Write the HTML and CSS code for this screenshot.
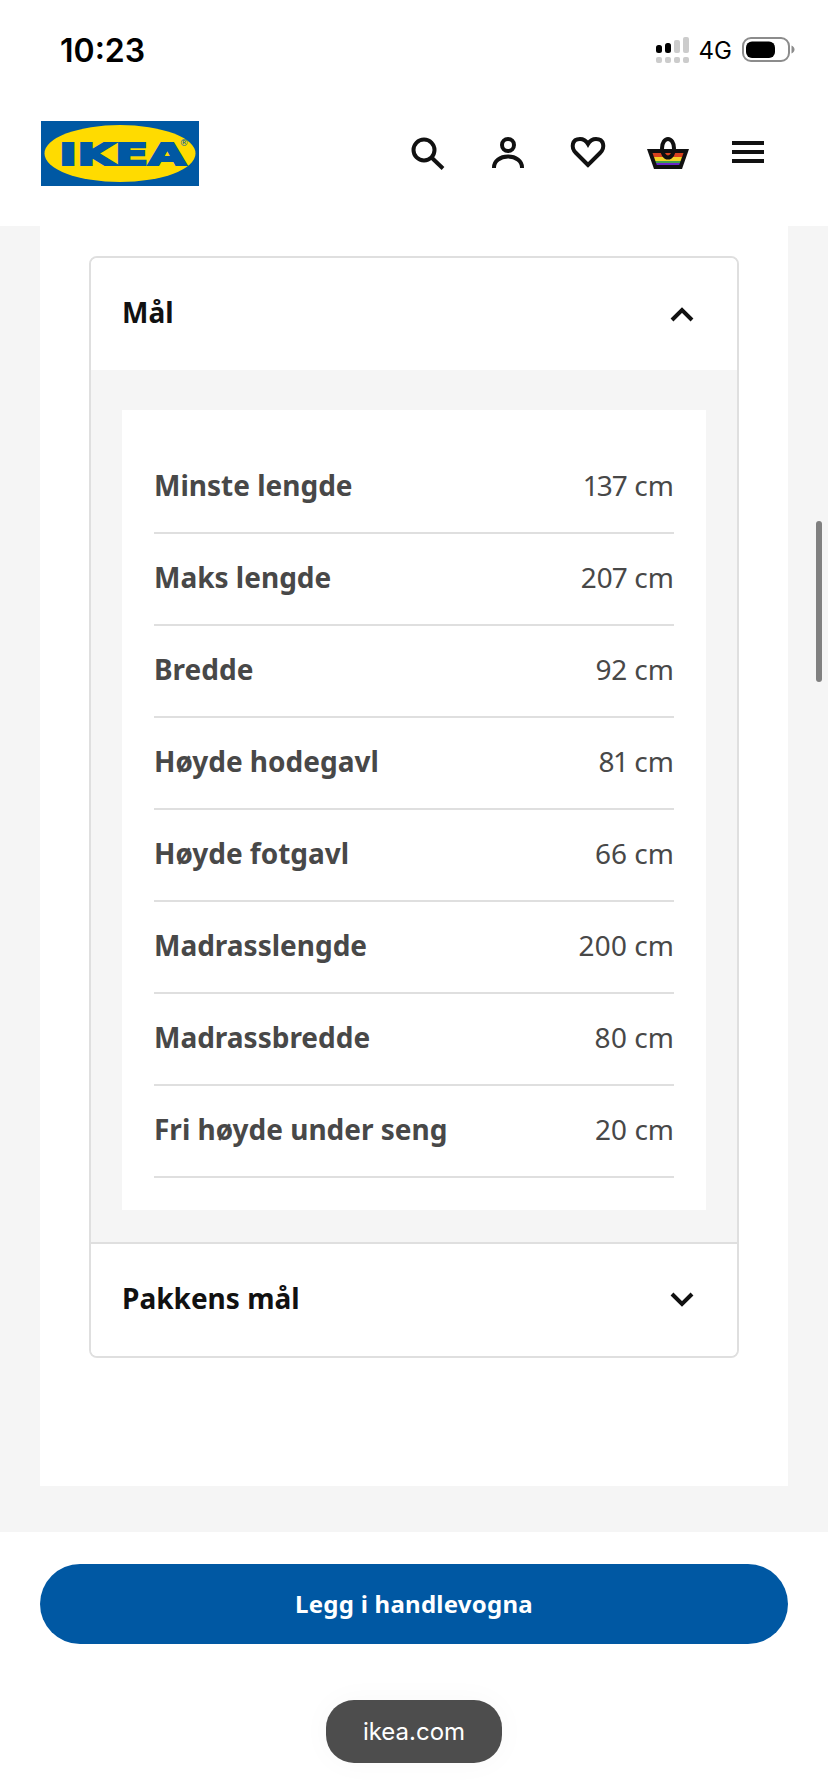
FILE: index.html
```html
<!DOCTYPE html>
<html lang="nb">
<head>
<meta charset="utf-8">
<title>IKEA – Mål</title>
<link rel="stylesheet" href="styles.css">
</head>
<body>
<div class="page">
  <div class="status">
    <span class="time">10:23</span>
    <div class="status-right">
      <svg class="signal" width="33" height="26" viewBox="0 0 33 26">
        <rect x="0" y="8" width="6" height="8" rx="2.5" fill="#000"/>
        <rect x="9" y="6" width="6" height="10" rx="2.5" fill="#000"/>
        <rect x="18" y="3" width="6" height="13" rx="2" fill="#ccc"/>
        <rect x="27" y="0" width="6" height="16" rx="2" fill="#ccc"/>
        <rect x="0" y="20" width="6" height="6" rx="2" fill="#ccc"/>
        <rect x="9" y="20" width="6" height="6" rx="2" fill="#ccc"/>
        <rect x="18" y="20" width="6" height="6" rx="2" fill="#ccc"/>
        <rect x="27" y="20" width="6" height="6" rx="2" fill="#ccc"/>
      </svg>
      <span class="net">4G</span>
      <svg class="battery" width="53" height="26" viewBox="0 0 53 26">
        <rect x="1" y="1" width="46" height="23" rx="8" fill="none" stroke="#8c8c8c" stroke-width="2"/>
        <rect x="4" y="4.500" width="29" height="16.500" rx="6" fill="#000"/>
        <path d="M49.500 8.500c2 .8 3 2.300 3 4s-1 3.200-3 4z" fill="#8c8c8c"/>
      </svg>
    </div>
  </div>

  <header class="header">
    <svg class="logo" width="158" height="65" viewBox="0 0 158 65">
      <rect width="158" height="65" fill="#0058a3"/>
      <ellipse cx="79" cy="32.500" rx="75.500" ry="28.500" fill="#ffdb00"/>
      <text class="logo-text" x="18" y="43.500" textLength="127" lengthAdjust="spacingAndGlyphs">IKEA</text>
      <text class="logo-reg" x="138.500" y="25">®</text>
    </svg>
    <nav class="nav">
      <svg class="icon" width="48" height="48" viewBox="0 0 48 48" fill="none" stroke="#111" stroke-width="4">
        <circle cx="20" cy="22" r="10.500"/>
        <path d="M27.500 29.500L39 40.500"/>
      </svg>
      <svg class="icon" width="48" height="48" viewBox="0 0 48 48" fill="none" stroke="#111" stroke-width="4">
        <circle cx="24" cy="17" r="6"/>
        <path d="M10 40v-.5c0-6.500 6-11 14-11s14 4.500 14 11v.5"/>
      </svg>
      <svg class="icon" width="48" height="48" viewBox="0 0 48 48" fill="none" stroke="#111" stroke-width="4">
        <path d="M24 37L12 25C6.500 19.500 8 11 16 11c4 0 6.500 2.500 8 5 1.500-2.500 4-5 8-5 8 0 9.500 8.500 4 14z"/>
      </svg>
      <svg class="icon" width="48" height="48" viewBox="0 0 48 48">
        <path d="M3 21h42l-7 20H10z" fill="#111"/>
        <path d="M8.500 25h31l-1.400 4h-28.200z" fill="#d8431f"/>
        <path d="M10 29h28l-1.400 4h-25.200z" fill="#f5d327"/>
        <path d="M11.400 33h25.200l-.7 2H12.100z" fill="#3fa24a"/>
        <path d="M12.100 35h23.800l-.7 2H12.800z" fill="#6a25c9"/>
        <ellipse cx="24" cy="20.250" rx="6" ry="9.250" fill="none" stroke="#111" stroke-width="4"/>
      </svg>
      <div class="burger"><span></span><span></span><span></span></div>
    </nav>
  </header>

  <main class="content">
    <section class="panel">
      <div class="accordion">
        <div class="acc-head">
          <h2 class="acc-title">Mål</h2>
          <svg width="24" height="16" viewBox="0 0 24 16" fill="none" stroke="#111" stroke-width="4"><path d="M2 14L12 4l10 10"/></svg>
        </div>
        <div class="acc-body">
          <dl class="spec">
            <div class="spec-row"><dt>Minste lengde</dt><dd>137 cm</dd></div>
            <div class="spec-row"><dt>Maks lengde</dt><dd>207 cm</dd></div>
            <div class="spec-row"><dt>Bredde</dt><dd>92 cm</dd></div>
            <div class="spec-row"><dt>Høyde hodegavl</dt><dd>81 cm</dd></div>
            <div class="spec-row"><dt>Høyde fotgavl</dt><dd>66 cm</dd></div>
            <div class="spec-row"><dt>Madrasslengde</dt><dd>200 cm</dd></div>
            <div class="spec-row"><dt>Madrassbredde</dt><dd>80 cm</dd></div>
            <div class="spec-row"><dt>Fri høyde under seng</dt><dd>20 cm</dd></div>
          </dl>
        </div>
        <div class="acc-head acc-head-last">
          <h2 class="acc-title">Pakkens mål</h2>
          <svg width="24" height="16" viewBox="0 0 24 16" fill="none" stroke="#111" stroke-width="4"><path d="M2 2l10 10L22 2"/></svg>
        </div>
      </div>
    </section>
    <div class="scrollbar"></div>
  </main>

  <footer class="footer">
    <button class="buy" type="button">Legg i handlevogna</button>
    <div class="url">ikea.com</div>
  </footer>
</div>
</body>
</html>
```
FILE: styles.css
```css
* { box-sizing: border-box; }
html, body { margin: 0; padding: 0; background: #fff; }
.page {
  width: 828px;
  height: 1792px;
  display: flex;
  flex-direction: column;
  overflow: hidden;
  font-family: "Noto Sans", sans-serif;
  position: relative;
}
.status {
  height: 100px;
  display: flex;
  justify-content: space-between;
  align-items: center;
  padding: 0 33px 0 60px;
}
.time {
  font-family: Inter, sans-serif;
  font-size: 32px;
  font-weight: 600;
  color: #000;
}
.status-right { display: flex; align-items: center; }
.signal { display: block; }
.net {
  font-family: Inter, sans-serif;
  font-size: 24px;
  color: #000;
  margin: 0 10px;
}
.battery { display: block; }
.header {
  height: 126px;
  display: flex;
  justify-content: space-between;
  align-items: flex-start;
  padding: 21px 56px 0 41px;
}
.logo { display: block; }
.logo-text {
  font-family: "DejaVu Sans", sans-serif;
  font-weight: 700;
  font-size: 31px;
  fill: #0058a3;
  stroke: #0058a3;
  stroke-width: 2px;
}
.logo-reg {
  font-family: "DejaVu Sans", sans-serif;
  font-size: 9px;
  fill: #0058a3;
}
.nav {
  display: flex;
  gap: 32px;
  margin-top: 7px;
}
.icon { display: block; }
.burger {
  width: 48px;
  height: 48px;
  padding: 13px 8px;
  display: flex;
  flex-direction: column;
  justify-content: space-between;
}
.burger span { display: block; height: 4px; background: #111; }
.content {
  height: 1306px;
  background: #f5f5f5;
  padding: 0 40px;
  position: relative;
}
.panel {
  height: 1260px;
  background: #fff;
  padding: 30px 49px 0 49px;
}
.accordion {
  border: 2px solid #dfdfdf;
  border-radius: 8px;
  overflow: hidden;
}
.acc-head {
  height: 112px;
  display: flex;
  justify-content: space-between;
  align-items: center;
  padding: 0 43px 0 31px;
  background: #fff;
}
.acc-head-last { border-top: 2px solid #dfdfdf; height: 114px; }
.acc-title {
  margin: 0 0 4px;
  font-size: 28px;
  font-weight: 700;
  color: #111;
}
.acc-body {
  background: #f5f5f5;
  padding: 40px 31px 32px;
}
.spec {
  margin: 0;
  background: #fff;
  padding: 32px 32px 32px;
}
.spec-row {
  height: 92px;
  display: flex;
  justify-content: space-between;
  align-items: center;
  border-bottom: 2px solid #dfdfdf;
  font-size: 28px;
  color: #484848;
  font-variant-numeric: proportional-nums;
}
.spec-row dt { font-weight: 700; margin-bottom: 4px; }
.spec-row dd { margin: 0 0 4px; font-weight: 400; }
.scrollbar {
  position: absolute;
  right: 6px;
  top: 295px;
  width: 6px;
  height: 161px;
  border-radius: 3px;
  background: #808080;
}
.footer {
  flex: 1;
  background: #fff;
  padding: 32px 40px 0;
  display: flex;
  flex-direction: column;
  align-items: center;
}
.buy {
  width: 100%;
  height: 80px;
  border: 0;
  border-radius: 40px;
  padding: 0 0 2px;
  background: #0058a3;
  color: #fff;
  font-family: "Noto Sans", sans-serif;
  font-size: 24px;
  font-weight: 700;
  letter-spacing: .25px;
}
.url {
  margin-top: 56px;
  width: 176px;
  height: 63px;
  border-radius: 28px;
  background: #4d4d4d;
  color: #fff;
  font-family: Inter, sans-serif;
  font-size: 24px;
  display: flex;
  align-items: center;
  justify-content: center;
  box-shadow: 0 0 30px rgba(0, 0, 0, .03);
}
```
